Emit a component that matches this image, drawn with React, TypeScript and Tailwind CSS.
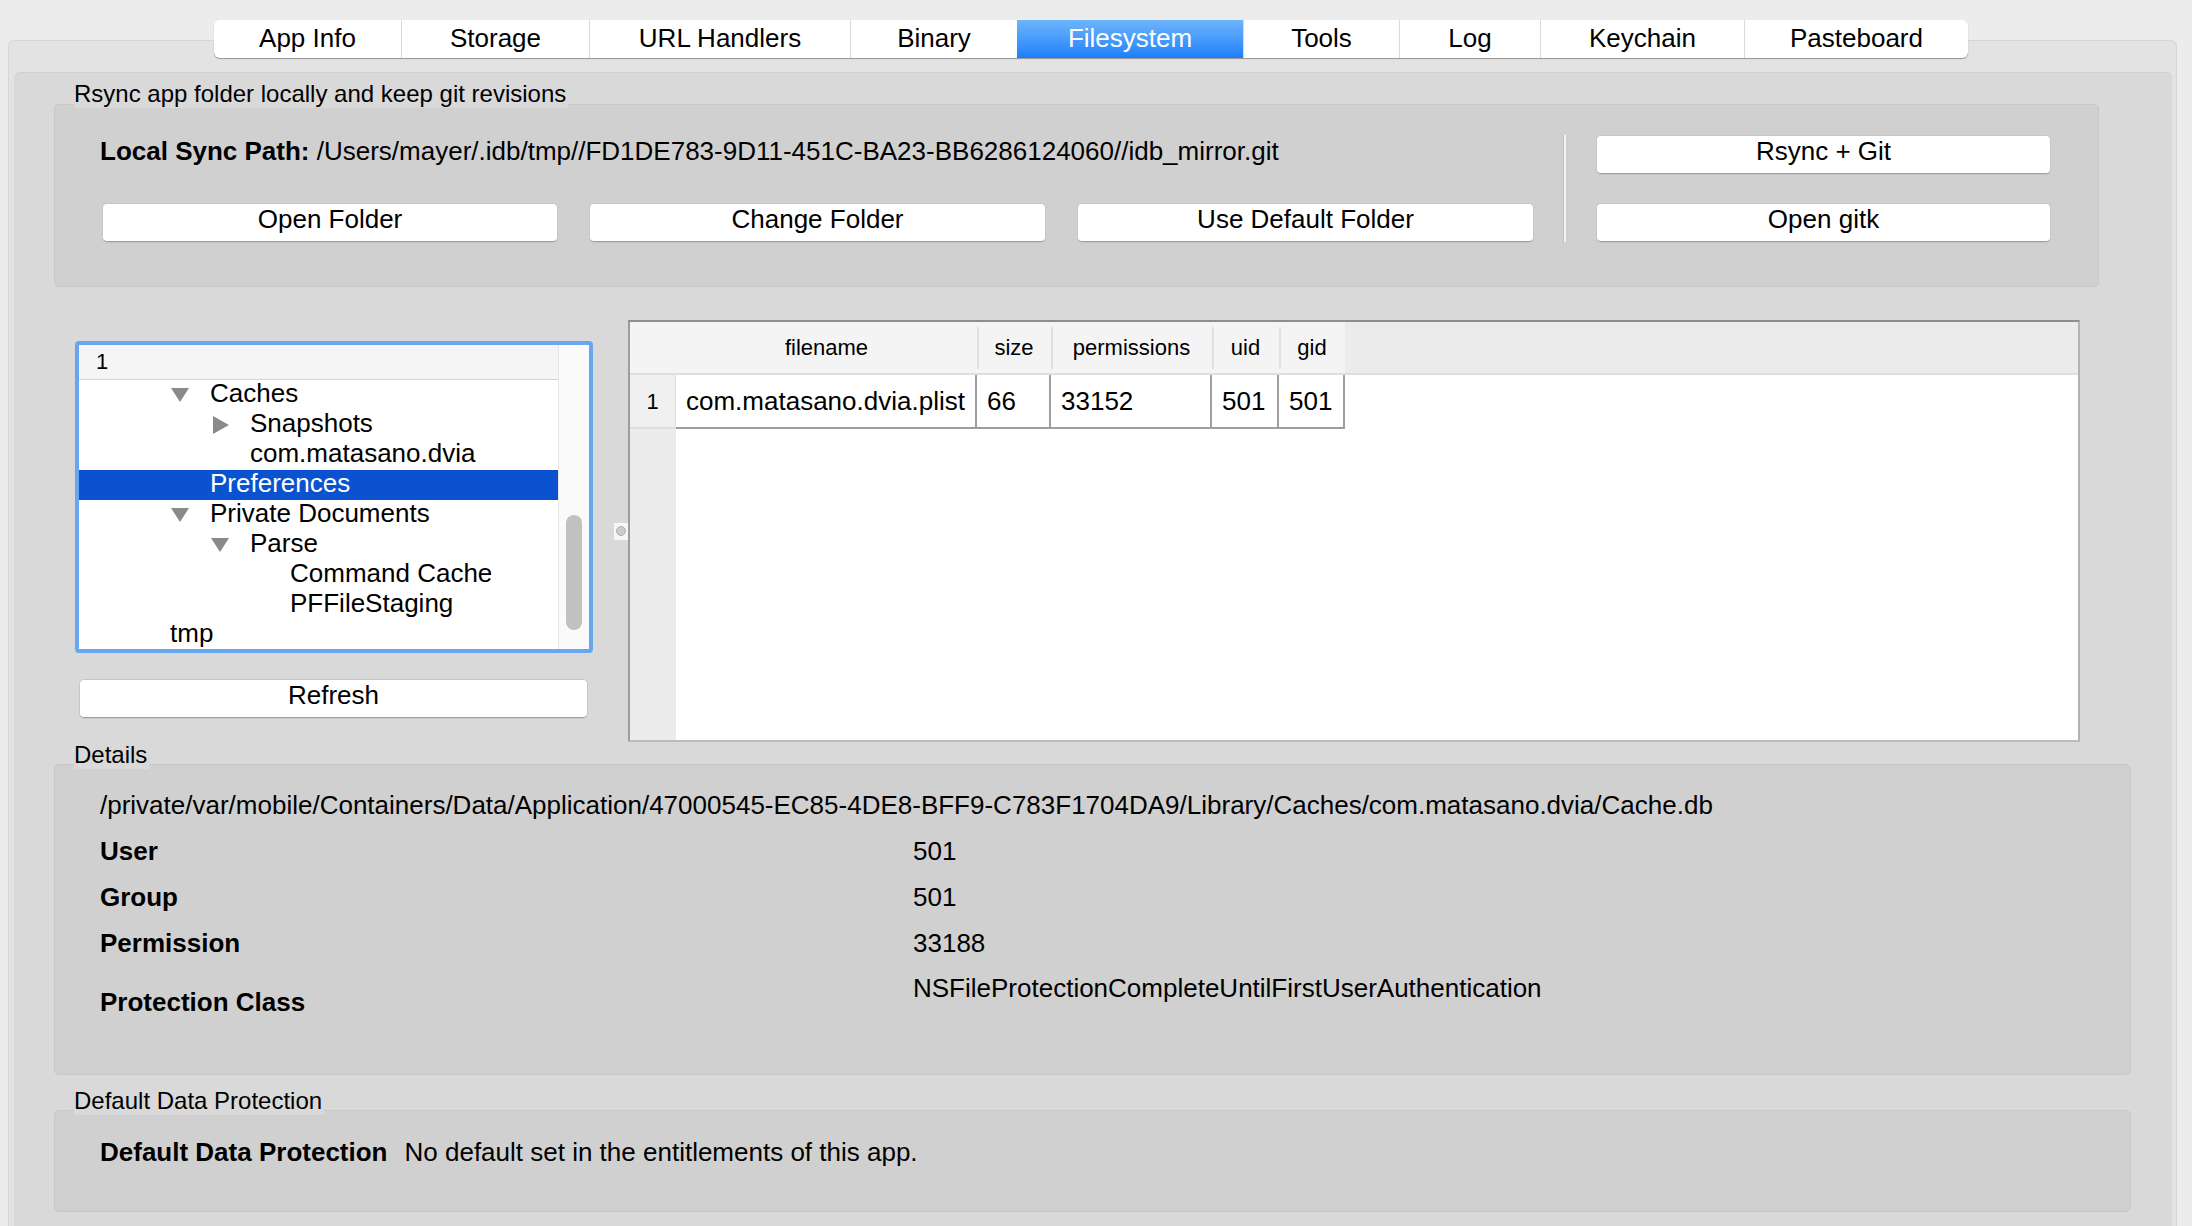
import React from "react";

const tabs = [
  { label: "App Info", w: "w-[187px]" },
  { label: "Storage", w: "w-[188px]" },
  { label: "URL Handlers", w: "w-[261px]" },
  { label: "Binary", w: "w-[167px]" },
  { label: "Filesystem", w: "w-[226px]", active: true },
  { label: "Tools", w: "w-[156px]" },
  { label: "Log", w: "w-[141px]" },
  { label: "Keychain", w: "w-[204px]" },
  { label: "Pasteboard", w: "w-[224px]" },
];

type Row = { level: number; arrow?: "down" | "right"; text: string; selected?: boolean };
const treeRows: Row[] = [
  { level: 1, arrow: "down", text: "Caches" },
  { level: 2, arrow: "right", text: "Snapshots" },
  { level: 2, text: "com.matasano.dvia" },
  { level: 1, text: "Preferences", selected: true },
  { level: 1, arrow: "down", text: "Private Documents" },
  { level: 2, arrow: "down", text: "Parse" },
  { level: 3, text: "Command Cache" },
  { level: 3, text: "PFFileStaging" },
  { level: 0, text: "tmp" },
];
const levelPad: Record<number, string> = {
  0: "pl-[51px]",
  1: "pl-[91px]",
  2: "pl-[131px]",
  3: "pl-[171px]",
};

function Btn({ children, className = "" }: { children: React.ReactNode; className?: string }) {
  return (
    <div
      className={
        "h-[39px] pb-[7px] bg-white rounded-[5px] border border-[#c6c6c6] border-b-[#9f9f9f] shadow-[0_1px_0_rgba(0,0,0,0.06)] text-[26px] leading-none flex items-center justify-center text-black " +
        className
      }
    >
      {children}
    </div>
  );
}

function GroupLabel({ children, className = "" }: { children: React.ReactNode; className?: string }) {
  return (
    <div className={"relative z-10 self-start ml-[60px] bg-[#d9d9d9] pr-[2px] text-[24px] leading-[28px] h-[28px] whitespace-nowrap " + className}>
      {children}
    </div>
  );
}

function DownArrow() {
  return (
    <svg width="18" height="14" viewBox="0 0 18 14" className="ml-[1px]">
      <polygon points="0,0 18,0 9,14" fill="#8a8a8a" />
    </svg>
  );
}
function RightArrow() {
  return (
    <svg width="16" height="18" viewBox="0 0 16 18" className="ml-[3px]">
      <polygon points="0,0 16,9 0,18" fill="#8a8a8a" />
    </svg>
  );
}

const cols = [
  { name: "filename", w: "w-[301px]", v: "com.matasano.dvia.plist", sep: false },
  { name: "size", w: "w-[74px]", v: "66", sep: true },
  { name: "permissions", w: "w-[161px]", v: "33152", sep: true },
  { name: "uid", w: "w-[67px]", v: "501", sep: true },
  { name: "gid", w: "w-[66px]", v: "501", sep: true },
];

export default function App() {
  return (
    <div className="w-[2192px] h-[1226px] overflow-hidden bg-[#ececec] font-['Liberation_Sans',Arial,Helvetica,sans-serif] text-black">
      {/* Tab bar */}
      <div className="relative z-20 pt-[20px] pl-[214px] flex">
        <div className="flex h-[38px] rounded-[6px] bg-white shadow-[0_1px_1px_rgba(0,0,0,0.35)]">
          {tabs.map((t, i) => (
            <div
              key={t.label}
              className={
                t.w +
                " h-[38px] pb-[2px] flex items-center justify-center text-[26px] leading-none " +
                (i === 0 ? "rounded-l-[6px] " : "border-l border-[#dadada] ") +
                (i === tabs.length - 1 ? "rounded-r-[6px] " : "") +
                (t.active ? "bg-linear-to-b from-[#6db5fb] to-[#1a7ffa] text-white border-l-0" : "text-black")
              }
            >
              {t.label}
            </div>
          ))}
        </div>
      </div>

      {/* Tab pane */}
      <div className="-mt-[18px] ml-[8px] mr-[15px] h-[1220px] rounded-[6px] bg-[#e3e3e3] border border-[#d6d6d6] pt-[31px] pl-[5px] pr-[4px]">
        <div className="h-[1180px] rounded-[6px] bg-[#d9d9d9] border-t border-[#d0d0d0] pt-[7px] flex flex-col">
          {/* Rsync group */}
          <GroupLabel className="-mb-[4px]">Rsync app folder locally and keep git revisions</GroupLabel>
          <div className="ml-[40px] w-[2045px] h-[183px] rounded-[5px] bg-[#d0d0d0] border border-[#c7c7c7] pt-[30px] pl-[45px] flex">
            <div className="w-[1434px] flex flex-col">
              <div className="h-[39px] pb-[6px] flex items-center text-[26px] whitespace-nowrap">
                <span className="font-bold">Local Sync Path:</span>
                <span>&nbsp;/Users/mayer/.idb/tmp//FD1DE783-9D11-451C-BA23-BB6286124060//idb_mirror.git</span>
              </div>
              <div className="mt-[29px] ml-[2px] flex gap-[31px]">
                <Btn className="w-[456px]">Open Folder</Btn>
                <Btn className="w-[457px]">Change Folder</Btn>
                <Btn className="w-[457px]">Use Default Folder</Btn>
              </div>
            </div>
            <div className="ml-[29px] w-[3px] h-[107px] border-l border-[#c2c2c2] bg-[#f2f2f2]" />
            <div className="ml-[30px] w-[455px] flex flex-col gap-[29px]">
              <Btn>Rsync + Git</Btn>
              <Btn>Open gitk</Btn>
            </div>
          </div>

          {/* Splitter area */}
          <div className="mt-[33px] ml-[61px] h-[422px] flex">
            <div className="w-[518px] pt-[21px] flex flex-col">
              <div className="h-[312px] w-[518px] border-4 border-[#67a7ef] rounded-[4px] bg-white flex overflow-hidden">
                <div className="flex-1 min-w-0 flex flex-col">
                  <div className="h-[35px] shrink-0 bg-[#f5f5f5] border-b border-[#d4d4d4] pl-[17px] pb-[2px] text-[22px] flex items-center">1</div>
                  {treeRows.map((r) => (
                    <div
                      key={r.text}
                      className={
                        "h-[30px] shrink-0 flex items-center text-[26px] leading-[30px] whitespace-nowrap " +
                        levelPad[r.level] +
                        (r.selected ? " bg-[#0b52d0] text-white" : " text-black")
                      }
                    >
                      <div className="w-[40px] shrink-0 flex items-center">
                        {r.arrow === "down" ? <DownArrow /> : r.arrow === "right" ? <RightArrow /> : null}
                      </div>
                      <span className="pb-[3px] leading-[27px]">{r.text}</span>
                    </div>
                  ))}
                </div>
                <div className="w-[31px] shrink-0 bg-[#fafafa] border-l border-[#e6e6e6] pt-[170px] pl-[7px]">
                  <div className="w-[16px] h-[115px] rounded-full bg-[#c1c1c1]" />
                </div>
              </div>
              <Btn className="mt-[26px] ml-[4px] w-[509px]">Refresh</Btn>
            </div>
            <div className="w-[21px]" />
            <div className="w-[14px] self-center h-[17px] bg-[#f7f7f7] flex items-center justify-center">
              <div className="w-[10px] h-[10px] rounded-full bg-[#cbcbcb] border border-[#b0b0b0]" />
            </div>
            {/* Table */}
            <div className="w-[1452px] h-[422px] border-2 border-t-[#8d8d8d] border-l-[#9d9d9d] border-r-[#b3b3b3] border-b-[#bbbbbb] bg-white flex flex-col">
              <div className="h-[53px] shrink-0 flex bg-[#ebebeb] border-b-2 border-[#dedede]">
                <div className="w-[46px] bg-[#f4f4f4]" />
                {cols.map((c) => (
                  <div
                    key={c.name}
                    className={
                      c.w +
                      " relative bg-[#f4f4f4] flex items-center justify-center text-[22px] " +
                      (c.sep
                        ? "after:absolute after:left-0 after:top-[5px] after:bottom-[4px] after:w-[2px] after:bg-[#e0e0e0]"
                        : "")
                    }
                  >
                    {c.name}
                  </div>
                ))}
              </div>
              <div className="h-[54px] shrink-0 flex">
                <div className="w-[46px] bg-[#f0f0f0] border-r border-b-2 border-[#dedede] flex items-center justify-center text-[22px]">1</div>
                {cols.map((c) => (
                  <div
                    key={c.name}
                    className={c.w + " bg-white border-r-2 border-b-2 border-[#9e9e9e] flex items-center pl-[10px] text-[26px] whitespace-nowrap"}
                  >
                    {c.v}
                  </div>
                ))}
              </div>
              <div className="flex-1 flex">
                <div className="w-[46px] bg-[#ececec]" />
                <div className="flex-1 bg-white" />
              </div>
            </div>
          </div>

          {/* Details */}
          <GroupLabel className="-mt-[1px] -mb-[5px]">Details</GroupLabel>
          <div className="ml-[40px] w-[2077px] h-[311px] rounded-[5px] bg-[#d0d0d0] border border-[#c7c7c7] pt-[17px] pl-[45px] text-[26px]">
            <div className="h-[46px] flex items-center whitespace-nowrap">
              /private/var/mobile/Containers/Data/Application/47000545-EC85-4DE8-BFF9-C783F1704DA9/Library/Caches/com.matasano.dvia/Cache.db
            </div>
            <div className="h-[46px] flex items-center">
              <div className="w-[813px] font-bold">User</div>
              <div>501</div>
            </div>
            <div className="h-[46px] flex items-center">
              <div className="w-[813px] font-bold">Group</div>
              <div>501</div>
            </div>
            <div className="h-[46px] flex items-center">
              <div className="w-[813px] font-bold">Permission</div>
              <div>33188</div>
            </div>
            <div className="h-[72px] flex items-start">
              <div className="w-[813px] h-[72px] font-bold flex items-center">Protection Class</div>
              <div className="h-[44px] flex items-center">NSFileProtectionCompleteUntilFirstUserAuthentication</div>
            </div>
          </div>

          {/* Default Data Protection */}
          <GroupLabel className="mt-[12px] -mb-[5px]">Default Data Protection</GroupLabel>
          <div className="ml-[40px] w-[2077px] h-[102px] rounded-[5px] bg-[#d0d0d0] border border-[#c7c7c7] pt-[25px] pl-[45px] text-[26px]">
            <div className="h-[32px] flex items-center whitespace-nowrap">
              <span className="font-bold">Default Data Protection</span>
              <span className="ml-[17px]">No default set in the entitlements of this app.</span>
            </div>
          </div>
        </div>
      </div>
    </div>
  );
}
